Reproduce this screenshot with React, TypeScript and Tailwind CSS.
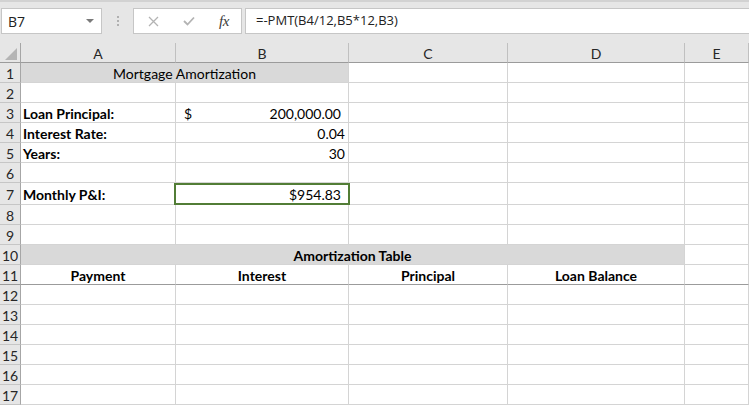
import React from "react";

const grid = "border-r border-b border-[#d4d4d4]";

function RowHead({ n, h = "h-[20px]", dark = false }: { n: number; h?: string; dark?: boolean }) {
  return (
    <div
      className={`${h} bg-[#e6e6e6] border-r border-r-[#a6a6a6] border-b ${dark ? "border-b-[#9b9b9b]" : "border-b-[#c6c6c6]"} flex items-center justify-center pt-[1px] text-[14px] text-[#262626] font-['Lato',sans-serif]`}
    >
      {n}
    </div>
  );
}

function C({
  children,
  className = "",
  h = "h-[20px]",
}: {
  children?: React.ReactNode;
  className?: string;
  h?: string;
}) {
  return (
    <div className={`${h} ${grid} flex items-center pt-[2px] whitespace-nowrap text-[14px] text-black ${className}`}>
      {children}
    </div>
  );
}

function EmptyRow({ n }: { n: number }) {
  return (
    <>
      <RowHead n={n} />
      <C />
      <C />
      <C />
      <C />
      <C />
    </>
  );
}

export default function App() {
  return (
    <div className="w-[749px] h-[405px] overflow-hidden bg-white font-['Lato',sans-serif] select-none">
      {/* Formula bar area */}
      <div className="h-[43px] bg-[#e6e6e6] border-t-2 border-t-[#d2d2d2] flex items-start pt-[6px]">
        <div className="w-[101px] h-[26px] ml-[1px] bg-white border border-[#c6c6c6] flex items-center justify-between pl-[6px] pr-[7px]">
          <span className="text-[14px] text-[#222] font-['Open_Sans',sans-serif]">B7</span>
          <div className="w-0 h-0 border-l-[4px] border-r-[4px] border-t-[4px] border-l-transparent border-r-transparent border-t-[#7a7a7a]" />
        </div>
        <div className="w-[31px] h-[26px] flex flex-col items-center justify-center gap-[2px]">
          <div className="w-[2px] h-[2px] bg-[#b0b0b0]" />
          <div className="w-[2px] h-[2px] bg-[#b0b0b0]" />
          <div className="w-[2px] h-[2px] bg-[#b0b0b0]" />
        </div>
        <div className="w-[109px] h-[26px] bg-white border border-[#c6c6c6] flex items-center">
          <div className="w-[36px] flex justify-center ml-[1px]">
            <svg width="11" height="11" viewBox="0 0 11 11">
              <path d="M1 1 L10 10 M10 1 L1 10" stroke="#b3b3b3" strokeWidth="1.3" fill="none" />
            </svg>
          </div>
          <div className="w-[36px] flex justify-center">
            <svg width="12" height="10" viewBox="0 0 12 10">
              <path d="M1 5 L4.5 8.5 L11 1.5" stroke="#b3b3b3" strokeWidth="1.8" fill="none" />
            </svg>
          </div>
          <div className="w-[34px] flex justify-center">
            <span className="text-[15px] italic text-[#3a3a3a] font-['Liberation_Serif',serif] tracking-[-0.5px]">fx</span>
          </div>
        </div>
        <div className="flex-1 h-[26px] ml-[3px] bg-white border border-[#c6c6c6] border-r-0 flex items-center pl-[10px]">
          <span className="text-[13px] text-[#222] font-['Open_Sans',sans-serif]">=-PMT(B4/12,B5*12,B3)</span>
        </div>
      </div>

      {/* Sheet grid */}
      <div className="grid grid-cols-[21px_155px_173px_159px_177px_64px]">
        {/* column headers */}
        <div className="h-[20px] bg-[#e6e6e6] border-r border-r-[#a6a6a6] border-b border-b-[#9b9b9b] relative">
          <svg className="absolute left-[5px] top-[5px]" width="12" height="12" viewBox="0 0 12 12">
            <path d="M12 0 L12 12 L0 12 Z" fill="#b4b4b4" />
          </svg>
        </div>
        {["A", "B", "C", "D", "E"].map((l) => (
          <div
            key={l}
            className="h-[20px] bg-[#e6e6e6] border-r border-r-[#c0c0c0] border-b border-b-[#9b9b9b] flex items-center justify-center pt-[1px] text-[14px] text-[#262626] font-['Lato',sans-serif]"
          >
            {l}
          </div>
        ))}

        {/* Row 1 */}
        <RowHead n={1} />
        <div className="col-span-2 h-[20px] bg-[#d9d9d9] border-r border-b border-[#d4d4d4] flex items-center justify-center pt-[2px] text-[14px] text-black">
          Mortgage Amortization
        </div>
        <C />
        <C />
        <C />

        <EmptyRow n={2} />

        {/* Row 3 */}
        <RowHead n={3} />
        <C className="pl-[2px] font-bold">Loan Principal:</C>
        <C className="pl-[8px] pr-[7px] justify-between">
          <span>$</span>
          <span>200,000.00</span>
        </C>
        <C />
        <C />
        <C />

        {/* Row 4 */}
        <RowHead n={4} />
        <C className="pl-[2px] font-bold">Interest Rate:</C>
        <C className="justify-end pr-[3px]">0.04</C>
        <C />
        <C />
        <C />

        {/* Row 5 */}
        <RowHead n={5} />
        <C className="pl-[2px] font-bold">Years:</C>
        <C className="justify-end pr-[3px]">30</C>
        <C />
        <C />
        <C />

        <EmptyRow n={6} />

        {/* Row 7 */}
        <RowHead n={7} h="h-[22px]" />
        <C h="h-[22px]" className="pl-[2px] font-bold">Monthly P&amp;I:</C>
        <C h="h-[22px]" className="justify-end pr-[7px] relative">
          <span>$954.83</span>
          <div className="absolute left-[-2px] top-0 w-[176px] h-[22px] border-2 border-[#527d36]" />
        </C>
        <C h="h-[22px]" />
        <C h="h-[22px]" />
        <C h="h-[22px]" />

        <EmptyRow n={8} />
        <EmptyRow n={9} />

        {/* Row 10 */}
        <RowHead n={10} />
        <div className="col-span-4 h-[20px] bg-[#d9d9d9] border-r border-b border-[#d4d4d4] flex items-center justify-center pt-[2px] text-[14px] font-bold text-black">
          Amortization Table
        </div>
        <C />

        {/* Row 11 */}
        <RowHead n={11} dark />
        <C className="justify-center font-bold border-b-[#9b9b9b]">Payment</C>
        <C className="justify-center font-bold border-b-[#9b9b9b]">Interest</C>
        <C className="justify-center font-bold border-b-[#9b9b9b]">Principal</C>
        <C className="justify-center font-bold border-b-[#9b9b9b]">Loan Balance</C>
        <C className="border-b-[#9b9b9b]" />

        <EmptyRow n={12} />
        <EmptyRow n={13} />
        <EmptyRow n={14} />
        <EmptyRow n={15} />
        <EmptyRow n={16} />
        <EmptyRow n={17} />
      </div>
    </div>
  );
}
